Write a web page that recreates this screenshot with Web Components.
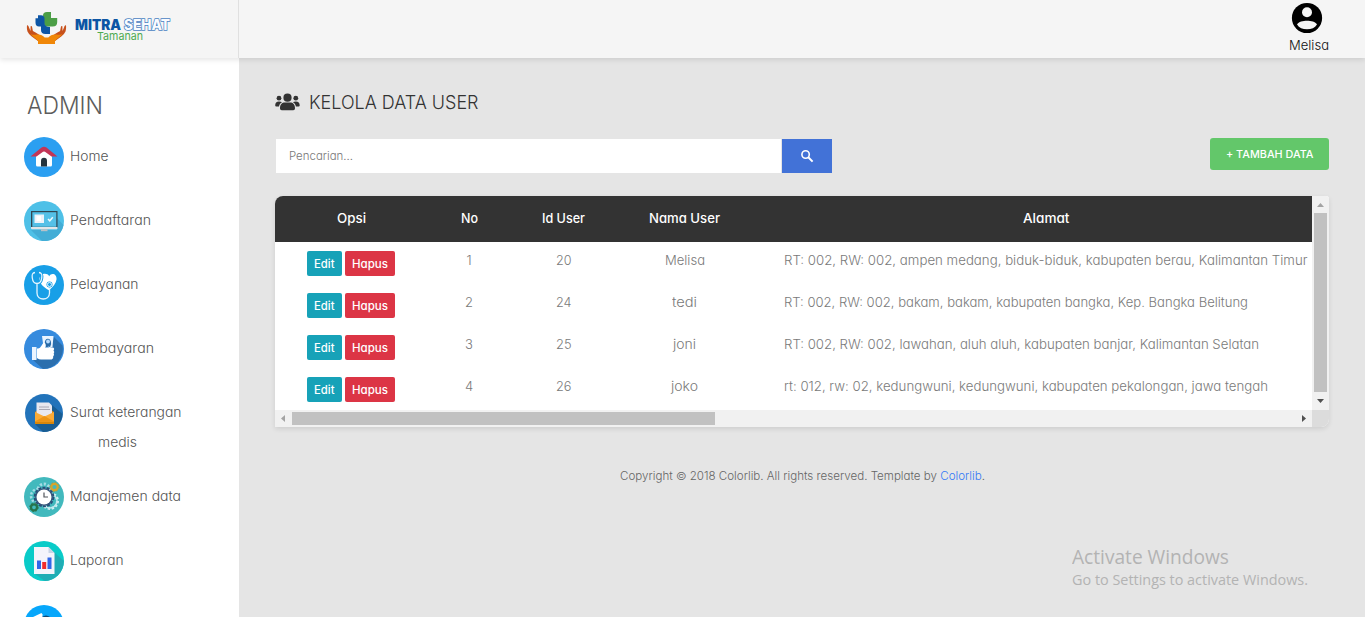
<!DOCTYPE html>
<html lang="id">
<head>
<meta charset="utf-8">
<title>Kelola Data User</title>
<style>
html,body{margin:0;height:100%;overflow:hidden}
body{font-family:Inter,"Open Sans",sans-serif;font-feature-settings:"cv11";font-size:13px;font-weight:360;background:#e5e5e5;color:#555}
</style>
</head>
<body>
<admin-app></admin-app>
<script>
const make = (name, html, setup) => customElements.define(name, class extends HTMLElement {
  connectedCallback() {
    if (this.shadowRoot) return;
    const t = document.createElement('template');
    t.innerHTML = typeof html === 'function' ? html(this) : html;
    this.attachShadow({mode: 'open'}).appendChild(t.content.cloneNode(true));
    if (setup) setup(this);
  }
});

make('admin-app', `
<style>
:host{display:grid;grid-template:58px 1fr/239px 1fr;height:617px;width:1365px;overflow:hidden;position:relative}
site-header{grid-column:1/3;z-index:2}
main{padding:30px 36px 0 36px;min-width:0}
.tools{display:flex;justify-content:space-between;height:58px}
footer{display:flex;justify-content:center;align-items:center;height:20px;margin-top:39px;font-size:11px;color:#666;line-height:20px}
footer a{color:#3478f6}
os-watermark{position:absolute;left:1072px;top:544px}
</style>
<site-header></site-header>
<side-nav></side-nav>
<main>
  <page-title></page-title>
  <div class="tools"><search-box></search-box><add-button></add-button></div>
  <data-table></data-table>
  <footer><fit-text w="365">Copyright © 2018 Colorlib. All rights reserved. Template by <a>Colorlib</a>.</fit-text></footer>
</main>
<os-watermark></os-watermark>`);

make('site-header', `
<style>
:host{display:flex;background:#f5f5f5;box-shadow:0 2px 5px rgba(0,0,0,.1);height:58px}
.brand{box-sizing:border-box;width:239px;border-right:1px solid #e0e0e0;padding:11px 0 0 26px}
.user{margin-left:auto;width:40px;padding:2px 36px 0 0;display:flex;flex-direction:column;align-items:center;color:#111;gap:1px}
.user fit-text{line-height:20px}
.user svg{display:block;margin-left:-4px}
</style>
<div class="brand"><brand-logo></brand-logo></div>
<div class="user">
<svg width="32" height="32" viewBox="0 0 32 32"><circle cx="16" cy="16" r="15.1" fill="#000"/><circle cx="16" cy="10.2" r="5" fill="#f5f5f5"/><path d="M6 22.4C7.6 19.6 12 18.7 16 18.7s8.400.9 10 3.700C23.800 25.700 20.500 27.300 16 27.300S8.200 25.700 6 22.400z" fill="#f5f5f5"/></svg>
<fit-text w="40">Melisa</fit-text></div>`);

make('brand-logo', `
<style>
:host{display:flex;height:34px;gap:8px}
.t{width:98px;display:flex;flex-direction:column;align-items:flex-start;padding-top:5px;box-sizing:border-box}
.r{display:flex;gap:3px;height:14px;font:900 14px/17px Inter,sans-serif;color:#0c55a4}
.o{font-weight:800;color:#f8fbff;-webkit-text-stroke:1.500px #4b83c3;paint-order:stroke fill}
.g{font:400 11px/12px Inter,sans-serif;color:#4eaa51;margin-left:22px;height:12px}
svg{flex:none}
</style>
<svg width="41" height="34" viewBox="0 0 41 34">
<path d="M17 4.500q0-3.500 4-3.500h4v6h6.200v4q0 4.500-4.500 4.500h-5.200q-3.500 0-3.500-3.500v-2z" fill="#4b9e46"/>
<path d="M9.500 7.200h2.500v-3h3q3.500 0 3.500 3.500v4q0 4.300 5.500 4.300v7h-4.500q-4.500 0-4.500-4v-3.500h-2q-3.500 0-3.500-4z" fill="#0d55a5"/>
<g fill="#c7511c"><path d="M1 14.500c1-.7 1.400.4 2 2l1.500 3.500.1-4.500c.6-.9 1.400-.2 1.600 1l.7 3.500c3 2 6 3 7.600 5.500L12 30c-5-3.500-9-6-10.500-9.500C.8 18 .8 16 1 14.500z"/><path d="M40 14.500c-1-.7-1.400.4-2 2l-1.500 3.500-.1-4.500c-.6-.9-1.400-.2-1.600 1l-.7 3.500c-3 2-6 3-7.600 5.500L29 30c5-3.500 9-6 10.500-9.500.7-2.500.7-4.500.5-6z"/></g>
<path d="M4.500 23c2 1 4 1 6 .6 3-.6 6 .3 8.200 2.900h3.600c2.200-2.600 5.200-3.500 8.200-2.900 2 .4 4 .4 6-.6-1.500 2.500-6 4.500-7.500 7.200V33H12v-2.800c-1.500-2.700-6-4.700-7.500-7.200z" fill="#f08708"/>
</svg>
<div class="t"><div class="r"><fit-text w="46">MITRA</fit-text><fit-text class="o" w="46">SEHAT</fit-text></div><fit-text class="g" w="46">Tamanan</fit-text></div>`);

const icons = {
home: `<circle cx="20" cy="20" r="20" fill="#2b9ff1"/><path d="M20 12.500l8 6v9.500q0 1.500-1.500 1.500h-13q-1.500 0-1.500-1.500v-9.500z" fill="#fff"/><path d="M6.500 19.500L17.600 10.500q2.400-1.600 4.800 0L33.500 19.500H27.500L21 14.800q-1-.6-2 0L12.500 19.500z" fill="#c33556"/><path d="M17 29.500v-5.700a3 3 0 016 0v5.700z" fill="#25343e"/>`,
monitor: `<circle cx="20" cy="20" r="20" fill="#4ec0e7"/><path d="M7 29l11 11a20 20 0 0021.500-16L33 17V29z" fill="#43add6"/><rect x="7" y="10" width="26.500" height="17" fill="#314753"/><rect x="8.300" y="11.200" width="24" height="14.600" fill="#55c0e7"/><rect x="10.500" y="13.500" width="9.500" height="8.500" fill="#eef3fa"/><rect x="12.500" y="15" width="4.500" height="5" fill="#fff"/><path d="M24 18l1.800 1.800 3-3.500" fill="none" stroke="#eefaff" stroke-width="1.500"/><path d="M7 26h26.500v1.200q0 1-1 1H8q-1 0-1-1z" fill="#e1e5e8"/><path d="M17 28.200h6.500v2H17z" fill="#b9c1c7"/>`,
care: `<circle cx="20" cy="20" r="20" fill="#189fe7"/><path d="M25 25.200c-5-3-9.500-6.500-9.500-10.800 0-6 7.500-7.300 9.700-3.200 2-4.100 8-2.600 7.300 3.200-.6 4.300-3.600 7.300-7.500 10.800z" fill="#fff"/><path d="M11 8c-3 .5-2.500 3-2.200 5 .4 3.500 1.700 5.500 4.200 5.500s4.300-2 4.700-5.500C18 10.500 18 8.500 15 8" fill="none" stroke="#189fe7" stroke-width="3.200"/><path d="M11 7.500c-3.500.5-3 3-2.700 5.500.4 3.500 2 5.500 4.700 5.500s4.300-2 4.700-5.500C18 10.500 18.500 8 15 7.500M13 18.500v9.500c0 8 12.500 8 12.500 0v-6" fill="none" stroke="#e4f5ff" stroke-width="1.300"/><circle cx="25.500" cy="19.500" r="3" fill="#189fe7"/><circle cx="25.500" cy="19.500" r="2" fill="none" stroke="#e4f5ff"/>`,
pay: `<circle cx="20" cy="20" r="20" fill="#368bde"/><path d="M30 8l8.500 8.500A20 20 0 0119 40L9 31l15-5z" fill="#2b6fae"/><path d="M8 18h4.500v13H8z" fill="#eaf4ff"/><path d="M18 7h11.500l-1 11-3 1-2-2-4 1z" fill="#eaf4ff"/><path d="M20.800 15c-.8-7 6.800-7 6.300 0l-1 3-2-.5-2 1z" fill="#286aa7"/><circle cx="24" cy="12.500" r="1.900" fill="#b9dcff"/><path d="M13 19.500c3 0 3.500-1.200 5.500-4.500 2-3.300 4.500.2 2.500 3.500H29q2 1 .5 3 1.500 1.500.2 3 1 1.700-.5 2.800.5 2.200-1.500 3.200H17q-2 0-4-1.500z" fill="#fff"/>`,
mail: `<circle cx="20" cy="20" r="19" fill="#2273ba"/><path d="M28 12l10.500 9A19 19 0 0119 39l-8-8z" fill="#195d93"/><path d="M11 19l3-2h13l3 2v12H11z" fill="#d8860a"/><path d="M12.500 9.500h12.500l3 3V26H12.500z" fill="#e9e8ef"/><path d="M15 14h10M15 16.500h11" stroke="#aaa8b4"/><path d="M11 19l9.500 4.500L30 19v9.500H11z" fill="#fbab36"/><path d="M11 28.500l9.500-5.500L30 28.500z" fill="#ee9414"/>`,
gear: `<circle cx="20" cy="20" r="20" fill="#42b9bd"/><g fill="none" stroke-dasharray="2.200 1.700"><circle cx="20" cy="13" r="6" stroke="#a4dce5" stroke-width="3"/><circle cx="14" cy="19" r="7" stroke="#a4dce5" stroke-width="2.500"/><circle cx="26" cy="24" r="7.500" stroke="#d0f0f4" stroke-width="3"/></g><circle cx="26" cy="24" r="7" fill="none" stroke="#c2e9ee" stroke-width="1.500"/><circle cx="20" cy="20" r="9.300" fill="none" stroke="#294d77" stroke-width="2" stroke-dasharray="3 1.200"/><circle cx="20" cy="20" r="8.800" fill="#35547a"/><circle cx="20" cy="20" r="7.500" fill="#fff"/><path d="M20 15.500V20h4" fill="none" stroke="#53565c" stroke-width="1.200"/><circle cx="30.500" cy="10" r="3.200" fill="none" stroke="#d7a52b" stroke-width="2.200"/><circle cx="30.500" cy="10" r="4.500" fill="none" stroke="#bf9a2d" stroke-dasharray="1.500 2"/><circle cx="10" cy="30.300" r="3" fill="none" stroke="#26744b" stroke-width="2.200"/><circle cx="10" cy="30.300" r="4.300" fill="none" stroke="#26744b" stroke-dasharray="1.500 1.900"/>`,
report: `<circle cx="20" cy="20" r="20" fill="#09cbc8"/><path d="M30 11l9.800 9A20 20 0 0121 40l-10-7z" fill="#20adb5"/><path d="M10 6h14.500l6 6v21H10z" fill="#f4f4fb"/><path d="M24.500 6v6h6z" fill="#c8d4e5"/><path d="M13 19.500h4V28h-4zM23.500 16.500h4V28h-4z" fill="#3267e8"/><path d="M18.200 21h4v7h-4z" fill="#f02b2b"/>`,
doctor: `<circle cx="20" cy="20" r="20" fill="#07a7fb"/><path d="M8 12.500l9.500-4.500 1 1.500v10H9z" fill="#fff"/><path d="M18 12q4-3 8 0v10h-8z" fill="#124976"/>`
};
make('nav-icon', el => `<style>:host{display:block;width:40px;height:40px;flex:none}svg{display:block}</style><svg width="40" height="40" viewBox="0 0 40 40">${icons[el.getAttribute('name')]}</svg>`);

make('nav-item', el => `
<style>
:host{display:flex;align-items:flex-start;gap:6px;padding:12px 0 0;height:52px;font-size:13px;color:#555}
:host([tall]){height:72px}
.l{line-height:30px;margin-top:4px;display:flex;flex-direction:column;align-items:center}
</style><nav-icon name="${el.getAttribute('icon')}"></nav-icon><div class="l"><slot></slot></div>`);

make('side-nav', `
<style>
:host{display:block;background:#fff;padding-left:24px;overflow:hidden;height:559px}
h1{margin:0;padding:33px 0 0 3px;font:350 24px/30px Inter,sans-serif;color:#5c5c5c;height:34px}
nav{display:flex;flex-direction:column}
.second{margin-right:16px}
</style>
<h1><fit-text w="76">ADMIN</fit-text></h1>
<nav>
<nav-item icon="home"><fit-text w="38.500">Home</fit-text></nav-item>
<nav-item icon="monitor"><fit-text w="81">Pendaftaran</fit-text></nav-item>
<nav-item icon="care"><fit-text w="68.500">Pelayanan</fit-text></nav-item>
<nav-item icon="pay"><fit-text w="84">Pembayaran</fit-text></nav-item>
<nav-item icon="mail" tall><fit-text w="111.500">Surat keterangan</fit-text><fit-text class="second" w="39">medis</fit-text></nav-item>
<nav-item icon="gear"><fit-text w="111">Manajemen data</fit-text></nav-item>
<nav-item icon="report"><fit-text w="53.500">Laporan</fit-text></nav-item>
<nav-item icon="doctor"></nav-item>
</nav>`);

make('page-title', `
<style>
:host{display:flex;align-items:center;height:28px;gap:9px;padding-bottom:22px;font-weight:330;font-size:19px;color:#333}
</style>
<svg width="25" height="18" viewBox="0 0 25 18" fill="#333"><circle cx="12.500" cy="4.700" r="4.100"/><circle cx="4" cy="5.200" r="2.400"/><circle cx="20.800" cy="5.200" r="2.400"/><path d="M5 15.500c0-4.200 2-6 5-6h5c3 0 5 1.800 5 6q0 1.700-1.700 1.700H6.700Q5 17.200 5 15.500zM.2 12.500C.2 9.800 1.500 8.500 4 8.500q2 0 3 .8c-1.800 1-2.700 2.200-3 4.300H1.300Q.2 13.600.2 12.500zM24.700 12.500c0-2.700-1.300-4-3.800-4q-2 0-3 .8c1.800 1 2.700 2.200 3 4.300h2.700q1.100 0 1.100-1.100z"/></svg>
<fit-text w="169.500">KELOLA DATA USER</fit-text>`);

make('search-box', `
<style>
:host{display:flex;gap:1px;padding:1px 0 0 1px;height:34px}
.f{width:505px;background:#fff;box-sizing:border-box;padding-left:13px;line-height:34px;font-size:11px;color:#777}
.b{width:50px;background:#4272d7;display:flex;align-items:center;justify-content:center}
</style>
<div class="f"><fit-text w="64">Pencarian...</fit-text></div><div class="b"><svg width="14" height="14" viewBox="0 0 14 14" fill="none" stroke="#fff"><circle cx="5.600" cy="5.500" r="3.700" stroke-width="1.600"/><path d="M8.300 8.300l4.300 4.300" stroke-width="2"/></svg></div>`);

make('add-button', `
<style>
:host{display:flex;align-items:center;justify-content:center;width:119px;height:32px;border-radius:3px;background:#63c76a;color:#fff;font-size:11px;font-weight:500}
</style><fit-text w="87.500">+ TAMBAH DATA</fit-text>`);

make('action-button', `
<style>
:host{display:flex;align-items:center;justify-content:center;height:25px;border-radius:2px;color:#fff;font-size:11.500px;font-weight:500;width:35px;line-height:14px;background:#17a2b8}
:host([danger]){background:#dc3545;width:50px}
</style><slot></slot>`);

const rows = [
 [1, 20, 'Melisa', 40, 'RT: 002, RW: 002, ampen medang, biduk-biduk, kabupaten berau, Kalimantan Timur', 523.5],
 [2, 24, 'tedi', 25, 'RT: 002, RW: 002, bakam, bakam, kabupaten bangka, Kep. Bangka Belitung', 464],
 [3, 25, 'joni', 23, 'RT: 002, RW: 002, lawahan, aluh aluh, kabupaten banjar, Kalimantan Selatan', 475],
 [4, 26, 'joko', 27, 'rt: 012, rw: 02, kedungwuni, kedungwuni, kabupaten pekalongan, jawa tengah', 484]];
make('data-table', `
<style>
:host{display:grid;grid-template:214px 17px/1037px 17px;width:1054px;border-radius:8px 3px 8px 0;overflow:hidden;box-shadow:0 2px 5px rgba(0,0,0,.1);background:#fff}
.view{overflow:hidden}
.row{display:grid;grid-template-columns:153px 82px 107px 135px 588px;height:42px;color:#7a7a7a;text-align:center}
.row>span{line-height:36px}
.row>span:last-child{text-align:left;padding-left:32px}
.head{height:46px;background:#333;color:#fff;font-weight:500}
.head>span{line-height:45px}
.head>span:last-child{text-align:center;padding:0}
.act{display:flex;gap:3px;padding:9px 0 0 32px}
.sb{background:#f1f1f1;display:flex;align-items:center;justify-content:space-between}
.v{flex-direction:column}
.thumb{background:#c1c1c1}
.v .thumb{width:13px;height:179px;margin-bottom:1px}
.h .thumb{height:13px;width:423px;margin-right:auto}
.c{background:#dcdcdc}
svg{width:17px;height:17px;flex:none}
</style>
<div class="view">
<div class="row head"><span><fit-text w="29">Opsi</fit-text></span><span><fit-text w="17">No</fit-text></span><span><fit-text w="43">Id User</fit-text></span><span><fit-text w="71">Nama User</fit-text></span><span><fit-text w="46.500">Alamat</fit-text></span></div>
${rows.map(r => `<div class="row"><div class="act"><action-button><fit-text w="20.500">Edit</fit-text></action-button><action-button danger><fit-text w="36">Hapus</fit-text></action-button></div><span>${r[0]}</span><span><fit-text w="15.500">${r[1]}</fit-text></span><span><fit-text w="${r[3]}">${r[2]}</fit-text></span><span><fit-text w="${r[5]}">${r[4]}</fit-text></span></div>`).join('')}
</div>
<div class="sb v"><svg><path d="M5 11h7L8.500 7z" fill="#a3a3a3"/></svg><div class="thumb"></div><svg><path d="M5 6h7l-3.500 4z" fill="#505050"/></svg></div>
<div class="sb h"><svg><path d="M10 5v7L6 8.500z" fill="#a3a3a3"/></svg><div class="thumb"></div><svg><path d="M7 5v7l4-3.500z" fill="#505050"/></svg></div>
<div class="c"></div>`);

make('os-watermark', `
<style>
:host{display:flex;flex-direction:column;align-items:flex-start;font-family:"Open Sans","Noto Sans",sans-serif;color:#b3b3b3;font-weight:400}
.a{font-size:19.500px;line-height:26px}.b{font-size:14px;line-height:20px}
</style><fit-text class="a" w="157">Activate Windows</fit-text><fit-text class="b" w="236">Go to Settings to activate Windows.</fit-text>`);

/* Stretches its text horizontally to the width given in "w". */
make('fit-text', `<style>:host{display:inline-block;white-space:nowrap;text-align:left}span{display:inline-block;transform-origin:0 50%}</style><span><slot></slot></span>`, el => {
  const s = el.shadowRoot.querySelector('span'), w = parseFloat(el.getAttribute('w'));
  s.style.transform = 'scaleX(' + w / s.getBoundingClientRect().width + ')';
  el.style.width = w + 'px';
});
</script>
</body>
</html>
